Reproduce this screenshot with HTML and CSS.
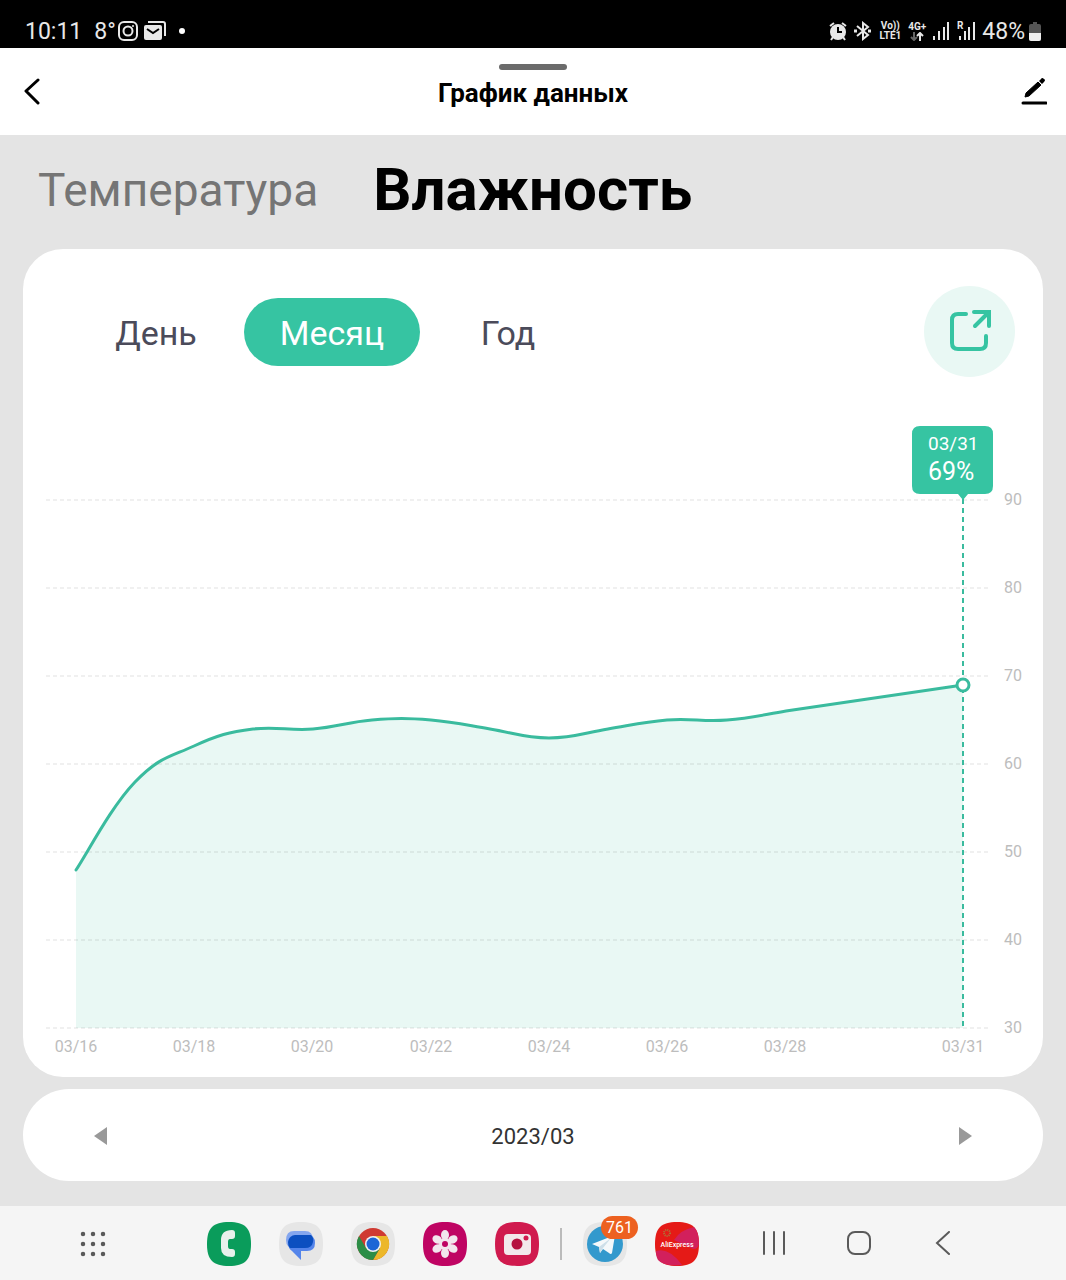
FILE: index.html
```
<!DOCTYPE html>
<html lang="ru">
<head>
    <meta charset="UTF-8">
    <meta name="viewport" content="width=device-width, initial-scale=1.0">
    <title>График данных</title>
    <link rel="stylesheet" href="styles.css">
</head>
<body>
    <!-- Строка состояния -->
    <div class="status">
        <div class="status-left">
            <span class="clock">10:11</span>
            <span class="degrees">8°</span>
            <svg width="20" height="20" viewBox="0 0 20 20" fill="none" stroke="#e8e8e8" stroke-width="2">
                <rect x="1" y="1" width="18" height="18" rx="5"/>
                <circle cx="10" cy="10" r="4.5"/>
                <circle cx="15" cy="5" r="1" fill="#e8e8e8" stroke="none"/>
            </svg>
            <svg class="mail" width="22" height="20" viewBox="0 0 22 20">
                <path d="M4 1H19Q21 1 21 3V15" fill="none" stroke="#e8e8e8" stroke-width="2"/>
                <rect x="0" y="4" width="18" height="15" rx="2" fill="#e8e8e8"/>
                <path d="M3 8L9 12L15 8" fill="none" stroke="#000" stroke-width="2"/>
            </svg>
            <span class="dot"></span>
        </div>
        <div class="status-right">
            <svg width="18" height="20" viewBox="0 0 18 20">
                <circle cx="9" cy="11" r="8" fill="#e8e8e8"/>
                <path d="M1 5L5 2M17 5L13 2M4 16L2 19M14 16L16 19" stroke="#e8e8e8" stroke-width="2"/>
                <path d="M9 6V11H13" fill="none" stroke="#000" stroke-width="2"/>
            </svg>
            <svg width="18" height="20" viewBox="0 0 18 20" fill="none" stroke="#e8e8e8" stroke-width="2">
                <path d="M3 5L14 14L9 18V2L14 6L3 15"/>
                <path d="M0 10H3M14 10H17" stroke-width="3"/>
            </svg>
            <span class="mini">Vo))<br>LTE1</span>
            <span class="mini mini-net">4G+
                <svg width="14" height="9" viewBox="0 0 14 9" fill="none" stroke-width="2">
                    <path d="M4 0V8M1 5L4 8L7 5" stroke="#666"/>
                    <path d="M10 9V1M7 4L10 1L13 4" stroke="#e8e8e8"/>
                </svg>
            </span>
            <svg width="17" height="18" viewBox="0 0 17 18" fill="#e8e8e8">
                <path d="M0 14H2V18H0zM5 9H7V18H5zM10 5H12V18H10zM14 0H16V18H14z"/>
            </svg>
            <svg class="roaming" width="18" height="20" viewBox="0 0 18 20" fill="#e8e8e8">
                <text x="0" y="8" class="roaming-text">R</text>
                <path d="M2 15H4V19H2zM7 10H9V19H7zM11 6H13V19H11zM16 1H18V19H16z"/>
            </svg>
            <span class="percent">48%</span>
            <svg width="12" height="19" viewBox="0 0 12 19">
                <path d="M4 0H8V2H10Q12 2 12 4V17Q12 19 10 19H2Q0 19 0 17V4Q0 2 2 2H4z" fill="#555"/>
                <path d="M0 11H12V17Q12 19 10 19H2Q0 19 0 17z" fill="#eee"/>
            </svg>
        </div>
    </div>

    <!-- Заголовок -->
    <header class="header">
        <button class="icon-button back" aria-label="Назад">
            <svg width="16" height="28" viewBox="0 0 16 28" fill="none" stroke="#000" stroke-width="3" stroke-linecap="round" stroke-linejoin="round">
                <path d="M14 3L2 14L14 26"/>
            </svg>
        </button>
        <div class="header-title">
            <span class="handle"></span>
            <h1>График данных</h1>
        </div>
        <button class="icon-button edit" aria-label="Изменить">
            <svg width="26" height="28" viewBox="0 0 26 28">
                <path d="M4 20L5 16L17 5L20 8L8 19z" stroke="#000" stroke-linejoin="round"/>
                <path d="M18 4L20 2Q21 0 23 2Q25 3 23 5L21 7z"/>
                <path d="M2 26H25" stroke="#000" stroke-width="3" stroke-linecap="round"/>
            </svg>
        </button>
    </header>

    <main class="content">
        <nav class="tabs">
            <button class="tab">Температура</button>
            <button class="tab tab-active">Влажность</button>
        </nav>

        <section class="card">
            <div class="toolbar">
                <button class="period">День</button>
                <button class="period period-active">Месяц</button>
                <button class="period">Год</button>
                <button class="share" aria-label="Экспорт">
                    <svg width="46" height="46" viewBox="0 0 46 46" fill="none" stroke="#36c4a2" stroke-width="4" stroke-linecap="round">
                        <path d="M19 5H11Q5 5 5 11V34Q5 40 11 40H33Q39 40 39 34V27"/>
                        <path d="M27 3H42V17"/>
                        <path d="M41 4L28 17"/>
                    </svg>
                </button>
            </div>

            <!-- График влажности -->
            <svg class="chart" viewBox="0 0 1020 700" role="img" aria-label="Влажность за март">
                <path class="area" d="M53 493C65 475 88 430 112 405C136 380 147 380 171 369C195 358 206 355 230 352C254 349 266 354 290 352C314 350 325 345 349 343C373 341 384 341 408 343C432 345 443 348 467 352C491 356 502 361 526 361C550 361 561 356 585 352C609 348 620 345 644 343C668 341 680 345 704 343C728 341 739 338 763 334C810 327 905 313 940 308V651H53z"/>
                <path class="grid" d="M23 123H967M23 211H967M23 299H967M23 387H967M23 475H967M23 563H967M23 651H967"/>
                <path class="line" d="M53 493C65 475 88 430 112 405C136 380 147 380 171 369C195 358 206 355 230 352C254 349 266 354 290 352C314 350 325 345 349 343C373 341 384 341 408 343C432 345 443 348 467 352C491 356 502 361 526 361C550 361 561 356 585 352C609 348 620 345 644 343C668 341 680 345 704 343C728 341 739 338 763 334C810 327 905 313 940 308"/>
                <path class="marker-line" d="M940 122V651"/>
                <circle class="marker" cx="940" cy="308" r="6"/>

                <g class="axis">
                    <text x="981" y="128">90</text>
                    <text x="981" y="216">80</text>
                    <text x="981" y="304">70</text>
                    <text x="981" y="392">60</text>
                    <text x="981" y="480">50</text>
                    <text x="981" y="568">40</text>
                    <text x="981" y="656">30</text>
                </g>
                <g class="axis axis-x">
                    <text x="53" y="675">03/16</text>
                    <text x="171" y="675">03/18</text>
                    <text x="289" y="675">03/20</text>
                    <text x="408" y="675">03/22</text>
                    <text x="526" y="675">03/24</text>
                    <text x="644" y="675">03/26</text>
                    <text x="762" y="675">03/28</text>
                    <text x="940" y="675">03/31</text>
                </g>

                <g class="tip">
                    <path d="M897 49H962Q970 49 970 57V109Q970 117 962 117H945L940 123L935 117H897Q889 117 889 109V57Q889 49 897 49z"/>
                    <text x="905" y="73" class="tip-date">03/31</text>
                    <text x="905" y="103" class="tip-value">69%</text>
                </g>
            </svg>
        </section>

        <div class="pager">
            <button class="icon-button" aria-label="Предыдущий месяц">
                <svg width="14" height="20" viewBox="0 0 14 20"><path d="M0 10L13 1V19z" fill="#999"/></svg>
            </button>
            <span>2023/03</span>
            <button class="icon-button" aria-label="Следующий месяц">
                <svg width="14" height="20" viewBox="0 0 14 20"><path d="M14 10L1 1V19z" fill="#999"/></svg>
            </button>
        </div>
    </main>

    <!-- Панель приложений -->
    <footer class="taskbar">
        <button class="icon-button" aria-label="Все приложения">
            <svg width="26" height="26" viewBox="0 0 26 26" fill="none" stroke="#5a5a5a" stroke-width="4.5" stroke-linecap="round">
                <path d="M3 3h0M13 3h0M23 3h0M3 13h0M13 13h0M23 13h0M3 23h0M13 23h0M23 23h0"/>
            </svg>
        </button>
        <div class="dock">
            <button class="app" aria-label="Телефон">
                <svg width="44" height="44" viewBox="0 0 44 44">
                    <path d="M22 0C38 0 44 6 44 22S38 44 22 44S0 38 0 22S6 0 22 0z" fill="#0a9c5b"/>
                    <path d="M25 8Q28 8 28 11V14Q28 17 25 17H23Q21 17 21 20V24Q21 27 23 27H25Q28 27 28 30V32Q28 35 25 35Q14 35 14 26V18Q14 8 25 8z" fill="#e8f1ec"/>
                </svg>
            </button>
            <button class="app" aria-label="Сообщения">
                <svg width="44" height="44" viewBox="0 0 44 44">
                    <path d="M22 0C38 0 44 6 44 22S38 44 22 44S0 38 0 22S6 0 22 0z" fill="#e6e6e6"/>
                    <path d="M15 9H26Q34 9 34 18Q34 26 26 26H15Q7 26 7 18Q7 9 15 9z" fill="#84a6ee"/>
                    <path d="M17 13H28Q36 13 36 21Q36 29 28 29H22V38L13 29Q9 26 9 21Q9 13 17 13z" fill="#5585ea"/>
                    <path d="M16 13H32Q35 16 34 20Q33 26 26 26H11Q9 24 9 20Q10 14 16 13z" fill="#0b4fc0"/>
                </svg>
            </button>
            <button class="app" aria-label="Chrome">
                <svg width="44" height="44" viewBox="0 0 44 44">
                    <path d="M22 0C38 0 44 6 44 22S38 44 22 44S0 38 0 22S6 0 22 0z" fill="#e6e6e6"/>
                    <circle cx="22" cy="22" r="16" fill="#cf3a32"/>
                    <path d="M22 22V14H36A16 16 0 0 1 22 38L29 26z" fill="#ecb729"/>
                    <path d="M22 22L15 26L8 14A16 16 0 0 0 22 38L29 26z" fill="#2c8d46"/>
                    <circle cx="22" cy="22" r="8" fill="#f1f1f1"/>
                    <circle cx="22" cy="22" r="6.5" fill="#1c66d6"/>
                </svg>
            </button>
            <button class="app" aria-label="Галерея">
                <svg width="44" height="44" viewBox="0 0 44 44">
                    <path d="M22 0C38 0 44 6 44 22S38 44 22 44S0 38 0 22S6 0 22 0z" fill="#bf0463"/>
                    <g fill="#f2e6ed">
                        <ellipse cx="22" cy="13" rx="4" ry="5"/>
                        <ellipse cx="22" cy="13" rx="4" ry="5" transform="rotate(60 22 22)"/>
                        <ellipse cx="22" cy="13" rx="4" ry="5" transform="rotate(120 22 22)"/>
                        <ellipse cx="22" cy="13" rx="4" ry="5" transform="rotate(180 22 22)"/>
                        <ellipse cx="22" cy="13" rx="4" ry="5" transform="rotate(240 22 22)"/>
                        <ellipse cx="22" cy="13" rx="4" ry="5" transform="rotate(300 22 22)"/>
                        <circle cx="22" cy="22" r="6"/>
                    </g>
                    <circle cx="22" cy="22" r="3" fill="#bf0463"/>
                </svg>
            </button>
            <button class="app" aria-label="Камера">
                <svg width="44" height="44" viewBox="0 0 44 44">
                    <path d="M22 0C38 0 44 6 44 22S38 44 22 44S0 38 0 22S6 0 22 0z" fill="#d01a4e"/>
                    <rect x="9" y="12" width="27" height="21" rx="4" fill="#f2e8eb"/>
                    <circle cx="22" cy="22" r="5.5" fill="#b5123f"/>
                    <circle cx="31" cy="16" r="2.5" fill="#d01a4e"/>
                </svg>
            </button>
            <span class="divider"></span>
            <button class="app" aria-label="Telegram">
                <svg width="44" height="44" viewBox="0 0 44 44">
                    <path d="M22 0C38 0 44 6 44 22S38 44 22 44S0 38 0 22S6 0 22 0z" fill="#e6e6e6"/>
                    <circle cx="22" cy="22" r="18" fill="#3399cd"/>
                    <path d="M9 22L32 13L29 31Q28 33 26 31L20 27L17 31L16 25z" fill="#f4f8fa"/>
                    <path d="M16 25L28 16L20 26L17 31z" fill="#cddfe9"/>
                </svg>
                <span class="badge">761</span>
            </button>
            <button class="app" aria-label="AliExpress">
                <svg width="44" height="44" viewBox="0 0 44 44">
                    <path d="M22 0C38 0 44 6 44 22S38 44 22 44S0 38 0 22S6 0 22 0z" fill="#e51a17"/>
                    <path d="M19 18Q25 8 39 5Q44 10 44 22Q43 27 38 27zM1 29Q14 25 27 43Q9 45 3 38Q1 35 1 29z" fill="#d2205c"/>
                    <circle cx="12" cy="11" r="3" fill="none" stroke="#a8793a" stroke-width="2" stroke-dasharray="1 1"/>
                    <text x="22" y="25" class="ali">AliExpress</text>
                </svg>
            </button>
        </div>
        <div class="system">
            <button class="icon-button" aria-label="Недавние">
                <svg width="26" height="26" viewBox="0 0 26 26" stroke="#5a5a5a" stroke-width="2" stroke-linecap="round">
                    <path d="M3 1V23M13 1V23M23 1V23"/>
                </svg>
            </button>
            <button class="icon-button" aria-label="Домой">
                <svg width="26" height="26" viewBox="0 0 26 26" fill="none" stroke="#5a5a5a" stroke-width="2">
                    <rect x="2" y="1" width="22" height="22" rx="7"/>
                </svg>
            </button>
            <button class="icon-button" aria-label="Назад">
                <svg width="26" height="26" viewBox="0 0 26 26" fill="none" stroke="#5a5a5a" stroke-width="2" stroke-linecap="round">
                    <path d="M18 1L6 12L18 23"/>
                </svg>
            </button>
        </div>
    </footer>
</body>
</html>
```
FILE: styles.css
```
* {
    box-sizing: border-box;
}
body {
    margin: 0;
    min-height: 100vh;
    display: flex;
    flex-direction: column;
    font-family: Roboto, sans-serif;
    background-color: #e4e4e4;
    color: #000;
}
button {
    background: none;
    border: none;
    padding: 0;
    font-family: inherit;
    color: inherit;
    cursor: pointer;
}
svg {
    display: block;
}
.icon-button {
    display: flex;
}

/* Строка состояния */
.status {
    height: 48px;
    padding: 14px 25px 0;
    display: flex;
    justify-content: space-between;
    align-items: center;
    background-color: #000;
    color: #e8e8e8;
    font-size: 23px;
}
.status-left, .status-right {
    display: flex;
    align-items: center;
}
.status-left {
    gap: 6px;
}
.status-right {
    gap: 7px;
}
.degrees {
    margin: 0 -4px 0 6px;
}
.dot {
    width: 6px;
    height: 6px;
    margin-left: 7px;
    border-radius: 50%;
    background-color: #fff;
}
.mini {
    font-size: 10px;
    line-height: 10px;
    font-weight: 700;
    text-align: center;
}
.mini-net svg {
    margin: 0 auto;
}
.roaming-text {
    font-size: 10px;
    font-weight: 700;
}
.percent {
    margin-right: -3px;
}

/* Заголовок */
.header {
    display: grid;
    grid-template-columns: 1fr auto 1fr;
    align-items: center;
    height: 87px;
    padding: 0 19px 2px;
    background-color: #fff;
}
.back {
    padding-left: 5px;
}
.edit {
    justify-self: end;
}
.header-title {
    display: flex;
    flex-direction: column;
    align-items: center;
}
.handle {
    width: 68px;
    height: 6px;
    border-radius: 3px;
    background-color: #6b6b6b;
}
h1 {
    margin: 7px 0 8px;
    font-size: 26px;
    line-height: 32px;
    font-weight: 700;
}

/* Вкладки */
.content {
    flex: 1;
    padding: 0 23px;
}
.tabs {
    display: flex;
    align-items: center;
    gap: 55px;
    height: 114px;
    padding: 0 0 5px 15px;
}
.tab {
    font-size: 46px;
    color: #757575;
}
.tab-active {
    font-size: 60px;
    font-weight: 700;
    color: #000;
}

/* Карточка с графиком */
.card {
    border-radius: 40px;
    background-color: #fff;
    padding-top: 37px;
}
.toolbar {
    display: flex;
    align-items: center;
    padding: 0 28px 0 45px;
}
.period {
    width: 176px;
    height: 68px;
    padding-top: 3px;
    border-radius: 34px;
    font-size: 34px;
    color: #4b4b5a;
}
.period-active {
    background-color: #36c4a2;
    color: #fff;
}
.share {
    display: flex;
    align-items: center;
    justify-content: center;
    width: 91px;
    height: 91px;
    margin-left: auto;
    border-radius: 50%;
    background-color: #e9f8f4;
}
.chart {
    width: 100%;
    height: auto;
}
.area {
    fill: #e9f8f4;
}
.grid {
    fill: none;
    stroke: #000;
    stroke-opacity: 0.12;
    stroke-dasharray: 4 3;
}
.line {
    fill: none;
    stroke: #3abb9e;
    stroke-width: 3;
    stroke-linecap: round;
}
.marker-line {
    stroke: #3abb9e;
    stroke-width: 2;
    stroke-dasharray: 5 4;
}
.marker {
    fill: #fff;
    stroke: #3abb9e;
    stroke-width: 3;
}
.axis {
    font-size: 16px;
    fill: #bdbdbd;
}
.axis-x {
    text-anchor: middle;
}
.tip {
    fill: #36c4a2;
}
.tip text {
    fill: #fff;
}
.tip-date {
    font-size: 19px;
}
.tip-value {
    font-size: 25px;
}

/* Выбор месяца */
.pager {
    display: flex;
    align-items: center;
    justify-content: space-between;
    height: 92px;
    margin: 12px 0 25px;
    padding: 2px 71px 0;
    border-radius: 46px;
    background-color: #fff;
    font-size: 22px;
    color: #333;
}

/* Панель приложений */
.taskbar {
    display: grid;
    grid-template-columns: 186fr 534fr 278fr 68fr;
    align-items: center;
    justify-items: center;
    height: 74px;
    padding-top: 2px;
    background-color: #f5f5f5;
}
.dock {
    display: flex;
    align-items: center;
    gap: 28px;
}
.app {
    position: relative;
}
.divider {
    width: 2px;
    height: 32px;
    margin: 0 -7px;
    background-color: #bbb;
}
.badge {
    position: absolute;
    top: -6px;
    right: -11px;
    padding: 0 5px;
    border-radius: 12px;
    background-color: #ed6120;
    color: #fff;
    font-size: 16px;
    line-height: 23px;
}
.ali {
    font-size: 7px;
    font-weight: 500;
    text-anchor: middle;
    fill: #fff;
}
.system {
    display: flex;
    gap: 59px;
}
```
